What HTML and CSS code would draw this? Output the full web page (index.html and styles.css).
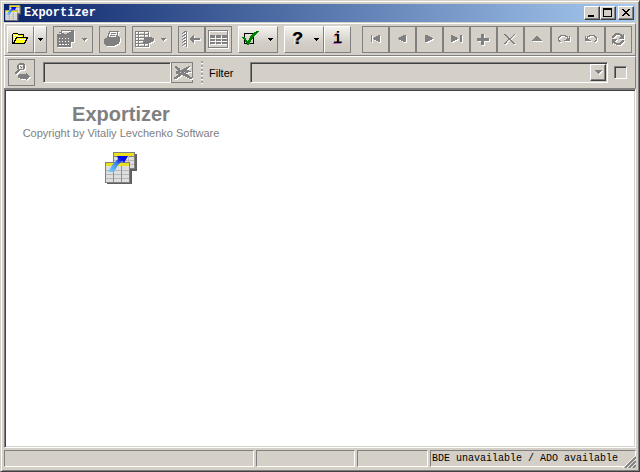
FILE: index.html
```
<!DOCTYPE html>
<html lang="en">
<head>
<meta charset="utf-8">
<title>Exportizer</title>
<link rel="stylesheet" href="styles.css">
</head>
<body>
<div class="window">
  <header class="titlebar">
    <svg class="app-icon" viewBox="0 0 32 32" aria-hidden="true"><use href="#logo"/></svg>
    <span class="title">Exportizer</span>
    <div class="window-buttons">
      <button type="button" aria-label="Minimize"><svg width="14" height="12"><path d="M3 8h6v2H3z"/></svg></button>
      <button type="button" aria-label="Maximize"><svg width="14" height="12"><path fill-rule="evenodd" d="M2 1h9v9H2zM3 3v6h7V3z"/></svg></button>
      <button type="button" class="close" aria-label="Close"><svg width="14" height="12"><path d="M3 2h2v1h1v1h2V3h1V2h2v1h-1v1H9v1H8v1h1v1h1v1h1v1H9V8H8V7H6v1H5v1H3V8h1V7h1V6h1V5H5V4H4V3H3z"/></svg></button>
    </div>
  </header>

  <div class="toolbar" role="toolbar" aria-label="Main">
    <div class="group">
      <button type="button" class="tool" aria-label="Open"><svg width="25" height="25"><path fill="#ff0" stroke="#000" d="M4.500 16.500v-9l1-1h4l1 1h5v3h4l-3 6zM5.500 16.500l3-6h8"/><path fill="#fff" d="M6 8h1v1H6zm2 0h1v1H8zm2 1h1v1h-1zm2 0h1v1h-1zM6 10h1v1H6zm0 2h1v1H6zm4 0h1v1h-1zm2 0h1v1h-1zm2 0h1v1h-1zm2 0h1v1h-1zm-7 2h1v1H9zm2 0h1v1h-1zm2 0h1v1h-1zm2 0h1v1h-1z"/></svg></button>
      <button type="button" class="drop" aria-label="Open recent"><svg width="11" height="25"><path d="M3 11h5v1H7v1H6v1H5v-1H4v-1H3z"/></svg></button>
    </div>
    <div class="group split">
      <button type="button" class="tool" disabled aria-label="Save as"><svg width="26" height="25"><path fill-rule="evenodd" d="M7 3h13v12h-3V9H7V6H5V5h2zM8 4v2h2v1h3V6h2V5h2V4z"/><path fill-rule="evenodd" d="M3 7h7v1h7v12H3zM5 11v1h1v-1zm3 0v1h1v-1zm3 0v1h1v-1zm3 0v1h1v-1zM5 14v1h1v-1zm3 0v1h1v-1zm3 0v1h1v-1zm3 0v1h1v-1zM5 17v1h2v-1zm3 0v1h2v-1zm3 0v1h2v-1zm3 0v1h1v-1z"/></svg></button>
      <button type="button" class="drop" disabled aria-label="Save options"><svg width="12" height="25"><path d="M2 11h5v1H6v1H5v1H4v-1H3v-1H2z"/></svg></button>
    </div>
    <div class="group">
      <button type="button" class="tool" disabled aria-label="Print"><svg width="25" height="25"><path fill-rule="evenodd" d="M9 4h10v1h-1v4h1v1h1v5h-1v2h-2v1h-2v1H6v-1H5v-1H4v-5h1v-1h2V9h1V6h1zM10 5v2H9v3h7V8h1V5z"/><path stroke="#808080" d="M11 6.500h5M10 8.500h5"/></svg></button>
    </div>
    <div class="group split">
      <button type="button" class="tool" disabled aria-label="Export"><svg width="26" height="25"><path fill-rule="evenodd" d="M2 4h14v6h3v1h2v3h-1v1h-2v1h-2v4H2zM3 5v2h2V5zm3 0v2h5V5zm6 0v2h3V5zM3 8v2h2V8zm3 0v2h5V8zm6 0v2h3V8zM3 11v2h2v-2zm3 0v2h5v-2zM3 14v2h2v-2zm3 0v2h4v-2zm-3 3v2h2v-2zm3 0v2h5v-2zm6 0v2h3v-2z"/></svg></button>
      <button type="button" class="drop" disabled aria-label="Export options"><svg width="12" height="25"><path d="M2 11h5v1H6v1H5v1H4v-1H3v-1H2z"/></svg></button>
    </div>
    <div class="group">
      <button type="button" class="tool" disabled aria-label="Fit columns"><svg width="25" height="25"><path fill="none" stroke="#808080" d="M3 7l4-3M3 10l4-3M3 13l4-3M3 16l4-3M3 19l4-3M7.500 4v16"/><path d="M10 12h1v-1h1v-1h1V9h1V8h1v3h6v2h-6v3h-1v-1h-1v-1h-1v-1h-1z"/></svg></button>
      <button type="button" class="tool" disabled aria-label="Grid view"><svg width="25" height="25"><path fill-rule="evenodd" d="M2 3h20v18H2zM3 4v16h18V4z"/><path d="M4 8h5v3H4zm6 0h5v3h-5zm6 0h5v3h-5zM4 12h5v2H4zm6 0h5v2h-5zm6 0h5v2h-5zM4 15h5v2H4zm6 0h5v2h-5zm6 0h5v2h-5z"/></svg></button>
    </div>
    <div class="group split">
      <button type="button" class="tool" aria-label="Options"><svg width="26" height="25"><path fill-rule="evenodd" d="M5 6h10v11H5zM6 7v9h8V7z"/><path fill="#008000" d="M3 10h3v1h1v2h1v1h1v-1h1v-2h1V9h1V8h1V7h1V6h1V5h2V4h3v1h-1v1h-1v1h-1v1h-1v1h-1v1h-1v2h-1v1h-1v2h-1v2h-1v1H8v-2H7v-1H6v-2H5v-1H4v-1H3z"/></svg></button>
      <button type="button" class="drop" aria-label="More options"><svg width="12" height="25"><path d="M3 11h5v1H7v1H6v1H5v-1H4v-1H3z"/></svg></button>
    </div>
    <div class="group">
      <div class="group split">
        <button type="button" class="tool glyph help">?</button>
        <button type="button" class="drop" aria-label="Help topics"><svg width="12" height="25"><path d="M3 11h5v1H7v1H6v1H5v-1H4v-1H3z"/></svg></button>
      </div>
      <button type="button" class="tool glyph">i</button>
    </div>
    <div class="group navigator">
      <button type="button" class="tool" disabled aria-label="First"><svg width="25" height="25"><path d="M8 8h1v7H8zM10 11h1v-1h2V9h2V8h2v7h-2v-1h-2v-1h-2v-1h-1z"/></svg></button>
      <button type="button" class="tool" disabled aria-label="Previous"><svg width="25" height="25"><path d="M8 11h1v-1h2V9h2V8h3v7h-3v-1h-2v-1H9v-1H8z"/></svg></button>
      <button type="button" class="tool" disabled aria-label="Next"><svg width="25" height="25"><path d="M8 8h3v1h2v1h2v1h1v1h-1v1h-2v1h-2v1H8z"/></svg></button>
      <button type="button" class="tool" disabled aria-label="Last"><svg width="25" height="25"><path d="M7 8h2v1h2v1h2v1h1v1h-1v1h-2v1H9v1H7zM16 8h2v7h-2z"/></svg></button>
      <button type="button" class="tool" disabled aria-label="Insert"><svg width="25" height="25"><path d="M10 7h3v4h5v3h-5v4h-3v-4H6v-3h4z"/></svg></button>
      <button type="button" class="tool" disabled aria-label="Delete"><svg width="25" height="25"><path d="M6 7h2v1h1v1h1v1h1v1h2v-1h1V9h1V8h1V7h1v1h-1v1h-1v1h-1v1h-1v2h1v1h1v1h1v1h1v1h-2v-1h-1v-1h-1v-1h-1v-1h-2v1h-1v1H9v1H8v1H6v-1h1v-1h1v-1h1v-1h1v-2H9v-1H8V9H7V8H6z"/></svg></button>
      <button type="button" class="tool" disabled aria-label="Edit"><svg width="25" height="25"><path d="M11 9h2v1h1v1h1v1h1v1h1v1H7v-1h1v-1h1v-1h1v-1h1z"/></svg></button>
      <button type="button" class="tool" disabled aria-label="Post"><svg width="25" height="25"><path fill="none" stroke="#808080" d="M9 14.500h-1.500v-1h-1v-3h1v-1h1v-1h5v1h2v2"/><path d="M18 9v5h-6v-1h2v-1h2v-1h1V9z"/></svg></button>
      <button type="button" class="tool" disabled aria-label="Cancel"><svg width="25" height="25"><path fill="none" stroke="#808080" d="M15 14.500h1.500v-1h1v-3h-1v-1h-1v-1h-5v1h-2v2"/><path d="M6 9v5h6v-1h-2v-1H8v-1H7V9z"/></svg></button>
      <button type="button" class="tool" disabled aria-label="Refresh"><svg width="25" height="25"><path d="M6 11v-2h1V8h1V7h1V6h5v1h2v1h1V7h1v5h-5v-1h1v-1h1V9h-1V8h-4v1H9v1H8v1zM18 13v2h-1v1h-1v1h-1v1h-5v-1H8v-1H7v1H6v-5h5v1h-1v1H9v1h1v1h4v-1h1v-1h1v-1z"/></svg></button>
    </div>
  </div>

  <form class="toolbar searchbar">
    <button type="button" class="tool" disabled aria-label="Find"><svg width="25" height="25"><path fill-rule="evenodd" d="M10 3h5v1h1v5h-1v1h-4v1h-1v1H9v1H8v1H6v-2h1v-1h1v-1h1V9H8V5h1V4h1zM10 5v4h4V5z"/><path d="M11 6h1v1h-1zm1 1h1v1h-1zM10 14h7v-1h1v1h1v1h1v1h1v1h-1v1h-1v1h-1v1h-1v-1h-6v-1H9v-3h1z"/></svg></button>
    <div class="find">
      <input type="text" class="field" aria-label="Search text" disabled>
      <button type="button" class="tool small" disabled aria-label="Clear search"><svg width="20" height="19"><path d="M3 3h2v1h1v1h2v2h2V6h2V5h2V4h2V3h2v1h-1v1h-1v1h-1v1h2v1h2v1h-3v1h-2v1h2v1h1v1h1v1h2v2h-3v-1h-2v-1h-2v-1h-2v-1H9v1H8v1H6v1H5v1H2v-2h2v-1h1v-1h1v-1H4V8h2V7H5V6H4V5H3z"/><path fill="#d4d0c8" d="M8 9h1v1H8zm4 0h1v1h-1z"/></svg></button>
    </div>
    <span class="grip"></span>
    <div class="filter">
      <label class="filter-label" for="filter">Filter</label>
      <div class="combo">
        <select id="filter" class="field" disabled></select>
        <span class="combo-arrow"><svg width="13" height="13"><path d="M3 4h7v1H9v1H8v1H7v1H6V7H5V6H4V5H3z"/></svg></span>
      </div>
      <input type="checkbox" class="check" aria-label="Apply filter" disabled>
    </div>
  </form>

  <main class="client">
    <div class="about">
      <h1>Exportizer</h1>
      <p>Copyright by Vitaliy Levchenko Software</p>
      <svg class="logo" viewBox="0 0 32 32" role="img" aria-label="Exportizer logo">
        <defs>
          <linearGradient id="arrow" x1="0" y1="1" x2="1" y2="0"><stop offset="0" stop-color="#80d0ff"/><stop offset=".45" stop-color="#408cf0"/><stop offset=".75" stop-color="#0008e8"/></linearGradient>
          <g id="logo">
            <path fill="#606060" d="M10 2h22v17H10zM2 12h25v20H2z"/>
            <path fill="#808080" d="M8 0h22v17H8z"/>
            <path fill="#dedede" d="M9 5h20v11H9z"/>
            <path fill="#e8e020" d="M9 1h20v3H9z"/>
            <path stroke="#b8b8b8" d="M16.500 4v12M23.500 4v12M9 8.500h20M9 12.500h20"/>
            <path fill="#808080" d="M0 10h25v21H0z"/>
            <path fill="#dedede" d="M1 14h23v16H1z"/>
            <path fill="#e8e020" d="M1 11h23v3H1z"/>
            <path stroke="#b8b8b8" d="M1 18.500h23M1 22.500h23M1 26.500h23"/>
            <path stroke="#909090" d="M8.500 14v16M16.500 14v16"/>
            <path fill="url(#arrow)" d="M12 4h11l-4 7-2-2-4 4-4 7H3l5-8 5-5z"/>
          </g>
        </defs>
        <use href="#logo"/>
      </svg>
    </div>
  </main>

  <footer class="statusbar">
    <span class="panel wide"></span>
    <span class="panel medium"></span>
    <span class="panel narrow"></span>
    <span class="panel message">BDE unavailable / ADO available</span>
    <svg class="resize" width="13" height="13" aria-hidden="true"><path stroke="#fff" d="M0 13L13 0M4 13l9-9M8 13l5-5"/><path stroke="#808080" stroke-width="2" d="M2 13L13 2M6 13l7-7M10 13l3-3"/></svg>
  </footer>
</div>
</body>
</html>
```
FILE: styles.css
```
* {
  box-sizing: border-box;
}

body {
  margin: 0;
  background: #d4d0c8;
  font: 11px/14px "Liberation Sans", Arial, sans-serif;
  color: #000;
}

button {
  margin: 0;
  padding: 0;
  color: #000;
}

svg {
  display: block;
  flex: none;
}

.window {
  display: flex;
  flex-direction: column;
  min-height: 100vh;
  padding: 3px;
  border: 1px solid;
  border-color: #d4d0c8 #404040 #404040 #d4d0c8;
  box-shadow: inset 1px 1px #fff, inset -1px -1px #808080;
}

.titlebar {
  display: flex;
  align-items: center;
  gap: 3px;
  height: 18px;
  padding: 0 2px 0 1px;
  margin-bottom: 1px;
  background: linear-gradient(to right, #0a246a, #a6caf0);
}

.app-icon {
  width: 16px;
  height: 16px;
}

.title {
  color: #fff;
  font: bold 12px/16px "Liberation Mono", "Courier New", monospace;
}

.window-buttons {
  display: flex;
  margin-left: auto;
}

.window-buttons button {
  width: 16px;
  height: 14px;
  background: #d4d0c8;
  border: 1px solid;
  border-color: #fff #404040 #404040 #fff;
  box-shadow: inset -1px -1px #808080;
}

.window-buttons svg {
  shape-rendering: crispEdges;
}

.window-buttons .close {
  margin-left: 2px;
}

.toolbar {
  display: flex;
  gap: 6px;
  padding: 2px;
  border: 1px solid;
  border-color: #fff #808080 #808080 #fff;
}

.group {
  display: flex;
}

.navigator {
  margin-left: 5px;
}

.tool,
.drop {
  display: flex;
  align-items: center;
  justify-content: center;
  width: 27px;
  height: 27px;
  flex: none;
  border: 1px solid;
  border-color: #fff #808080 #808080 #fff;
  background: linear-gradient(#f4f2ee, #d4d0c8 60%, #ccc8c0);
}

.drop {
  width: 13px;
}

.split .tool {
  border-right: 0;
}

.split .drop {
  border-left: 0;
}

.tool:disabled,
.drop:disabled {
  border-color: #808080;
  background: #d4d0c8;
}

.tool svg,
.drop svg {
  shape-rendering: crispEdges;
}

.tool:disabled svg,
.drop:disabled svg {
  fill: #808080;
  filter: drop-shadow(1px 1px 0 #fff);
}

.glyph {
  font: bold 16px/25px "Liberation Mono", "Courier New", monospace;
  text-shadow: -1px 0 #fff, -1px 1px #c060c0;
}

.help {
  font-size: 18px;
  text-shadow: -1px 0 #808080, -2px 0 #fff;
}

.searchbar {
  align-items: center;
  gap: 8px;
  padding: 2px 8px 2px 3px;
  border-bottom: 0;
}

.find,
.filter {
  display: flex;
  align-items: center;
}

.filter {
  flex: 1;
  margin-left: -2px;
}

.field {
  width: 128px;
  height: 21px;
  margin: 0;
  padding: 0 3px;
  appearance: none;
  background: #d4d0c8;
  border: 1px solid;
  border-color: #808080 #fff #fff #808080;
  border-radius: 0;
  box-shadow: inset 1px 1px #404040;
  opacity: 1;
}

.tool.small {
  width: 22px;
  height: 21px;
}

.grip {
  width: 2px;
  height: 23px;
  background: repeating-linear-gradient(#a0a0a0 0 2px, #fff 2px 3px, #d4d0c8 3px 4px);
}

.filter-label {
  width: 41px;
}

.combo {
  position: relative;
  flex: 1;
}

.combo .field {
  display: block;
  width: 100%;
}

.combo-arrow {
  position: absolute;
  top: 2px;
  right: 2px;
  width: 16px;
  height: 17px;
  padding: 1px;
  border: 1px solid;
  border-color: #fff #404040 #404040 #fff;
  box-shadow: inset -1px -1px #808080;
  background: #d4d0c8;
}

.combo-arrow svg {
  fill: #808080;
  filter: drop-shadow(1px 1px 0 #fff);
  shape-rendering: crispEdges;
}

.check {
  appearance: none;
  width: 13px;
  height: 13px;
  margin: 0 0 0 6px;
  border: 1px solid;
  border-color: #808080 #fff #fff #808080;
  box-shadow: inset 1px 1px #404040;
}

.client {
  flex: 1;
  padding: 12px 0 0;
  background: #fff;
  border: 1px solid;
  border-color: #808080 #fff #fff #808080;
  border-top-width: 2px;
  box-shadow: inset 1px 1px #404040, inset -1px -1px #d4d0c8;
}

.about {
  display: flex;
  flex-direction: column;
  align-items: center;
  width: 232px;
  color: #808080;
}

.about h1 {
  margin: 0;
  font-size: 20px;
  line-height: 24px;
}

.about p {
  margin: 0;
}

.logo {
  width: 32px;
  height: 32px;
  margin-top: 12px;
}

.statusbar {
  position: relative;
  display: flex;
  gap: 2px;
  padding: 2px 0 1px;
  font: 10px/15px "Liberation Mono", "Courier New", monospace;
}

.panel {
  height: 17px;
  border: 1px solid;
  border-color: #808080 #fff #fff #808080;
}

.wide {
  flex: 1;
}

.medium {
  width: 99px;
}

.narrow {
  width: 71px;
}

.message {
  width: 206px;
  padding-left: 1px;
}

.resize {
  position: absolute;
  right: 0;
  bottom: 0;
}
```
